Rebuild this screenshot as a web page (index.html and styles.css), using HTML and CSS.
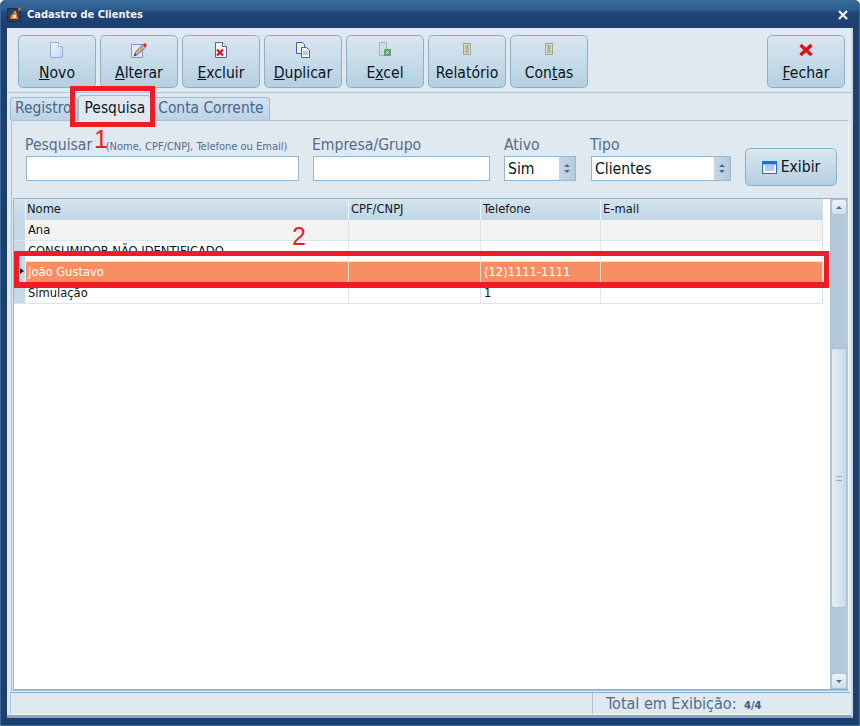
FILE: index.html
```html
<!DOCTYPE html>
<html lang="pt">
<head>
<meta charset="utf-8">
<title>Cadastro de Clientes</title>
<link rel="stylesheet" href="styles.css">
</head>
<body>
<div class="window">
  <header class="titlebar">
    <svg class="app-icon" width="15" height="15" viewBox="0 0 15 15"><rect x=".5" y="1.5" width="13" height="13" fill="#24415f" stroke="#16304d"/><path d="M3 12l1-4 2-1 1-3 2 0 1 4 1 4z" fill="#e8813c"/><rect x="6" y="8" width="3" height="3" fill="#f5e6d6"/><circle cx="12.500" cy="2" r="1.500" fill="#f07020"/></svg>
    <span class="title">Cadastro de Clientes</span>
    <svg class="close" width="10" height="10" viewBox="0 0 10 10"><path d="M1 1l8 8M9 1l-8 8" stroke="#e4ecf4" stroke-width="2.400"/></svg>
  </header>
  <main class="client">
    <div class="toolbar">
      <button class="tbtn">
        <svg width="16" height="18" viewBox="0 0 16 18"><defs><linearGradient id="pg" x1="0" y1="0" x2="1" y2="1"><stop offset="0" stop-color="#f8fbff"/><stop offset="1" stop-color="#b9d2f4"/></linearGradient></defs><path d="M1.500 1.500h8l4 4v11h-12z" fill="url(#pg)" stroke="#9aa9da"/><path d="M9.500 1.500v4h4" fill="#fff" stroke="#9aa9da"/></svg>
        <span><u>N</u>ovo</span>
      </button>
      <button class="tbtn">
        <svg width="18" height="18" viewBox="0 0 18 18"><path d="M1.500 3.500h11v13h-11z" fill="#e3e8f6" stroke="#8a92c8"/><path d="M4 15l1.500-4 8-8 2.500 2.500-8 8z" fill="#c9b078" stroke="#5a5a70" stroke-width=".8"/><path d="M14 3l2 2" stroke="#d82020" stroke-width="2.500"/><path d="M4 15l1-2.500 1.500 1.500z" fill="#3c3c48"/></svg>
        <span><u>A</u>lterar</span>
      </button>
      <button class="tbtn">
        <svg width="16" height="18" viewBox="0 0 16 18"><path d="M2.500 1.500h7l4 4v11h-11z" fill="#f6f6fa" stroke="#5c6488"/><path d="M9.500 1.500v4h4" fill="#fff" stroke="#5c6488"/><path d="M4 8.500l6 6M10 8.500l-6 6" stroke="#d01818" stroke-width="2.200"/></svg>
        <span><u>E</u>xcluir</span>
      </button>
      <button class="tbtn">
        <svg width="16" height="18" viewBox="0 0 16 18"><path d="M1.500 1.500h6l2 2v9h-8z" fill="#e8eefa" stroke="#5060a8"/><path d="M6.500 6.500h5l3 3v7h-8z" fill="#f4f7fe" stroke="#5060a8"/><path d="M8 11h5M8 13h5" stroke="#7d9ccc"/></svg>
        <span><u>D</u>uplicar</span>
      </button>
      <button class="tbtn">
        <svg width="16" height="18" viewBox="0 0 16 18"><path d="M2.500 1.500h7v13h-7z" fill="#d4dce2" stroke="#a9b0b4"/><rect x="7" y="8" width="7" height="7" rx="1" fill="#58a868"/><path d="M9 10l3 3M12 10l-3 3" stroke="#d8f0dc"/></svg>
        <span>E<u>x</u>cel</span>
      </button>
      <button class="tbtn">
        <svg width="16" height="18" viewBox="0 0 16 18"><path d="M4.500 2.500h7v11h-7z" fill="#dad8c8" stroke="#a3a491"/><path d="M6.500 5h3M6.500 7h3M6.500 9h3M6.500 11h3" stroke="#84856f"/></svg>
        <span>Relatório</span>
      </button>
      <button class="tbtn">
        <svg width="16" height="18" viewBox="0 0 16 18"><path d="M4.500 2.500h7v11h-7z" fill="#dad8c8" stroke="#a3a491"/><path d="M6.500 5h3M6.500 7h3M6.500 9h3M6.500 11h3" stroke="#84856f"/></svg>
        <span>Con<u>t</u>as</span>
      </button>
      <button class="tbtn tbtn-end">
        <svg width="16" height="18" viewBox="0 0 16 18"><path d="M2.500 4l11 10M13.500 4l-11 10" stroke="#e01010" stroke-width="3.400"/></svg>
        <span><u>F</u>echar</span>
      </button>
    </div>
    <nav class="tabs">
      <span class="tab">Registro</span>
      <span class="tab active">Pesquisa</span>
      <span class="tab after">Conta Corrente</span>
    </nav>
    <section class="page">
      <form class="filters">
        <div class="field f-search">
          <label>Pesquisar <small>(Nome, CPF/CNPJ, Telefone ou Email)</small></label>
          <div class="input"></div>
        </div>
        <div class="field f-company">
          <label>Empresa/Grupo</label>
          <div class="input"></div>
        </div>
        <div class="field f-active">
          <label>Ativo</label>
          <div class="input combo"><span class="combo-text">Sim</span><span class="spin"><i class="up"></i><i class="down"></i></span></div>
        </div>
        <div class="field f-type">
          <label>Tipo</label>
          <div class="input combo"><span class="combo-text">Clientes</span><span class="spin"><i class="up"></i><i class="down"></i></span></div>
        </div>
        <button type="button" class="show">
          <svg width="15" height="13" viewBox="0 0 15 13"><rect x=".5" y=".5" width="14" height="12" fill="#fff" stroke="#1f6fd8"/><rect x="1" y="1" width="13" height="2.500" fill="#1f6fd8"/><path d="M3 5h9M3 7h9M3 9h9" stroke="#5f98e4"/></svg>
          Exibir
        </button>
      </form>
      <div class="grid-wrap">
        <div class="grid">
          <div class="row head"><span class="ind"></span><span class="c c1">Nome</span><span class="c c2">CPF/CNPJ</span><span class="c c3">Telefone</span><span class="c c4">E-mail</span></div>
          <div class="row alt"><span class="ind"></span><span class="c c1">Ana</span><span class="c c2"></span><span class="c c3"></span><span class="c c4"></span></div>
          <div class="row"><span class="ind"></span><span class="c c1">CONSUMIDOR NÃO IDENTIFICADO</span><span class="c c2"></span><span class="c c3"></span><span class="c c4"></span></div>
          <div class="row sel"><span class="ind"><i class="marker"></i></span><span class="c c1">João Gustavo</span><span class="c c2"></span><span class="c c3">(12)1111-1111</span><span class="c c4"></span></div>
          <div class="row"><span class="ind"></span><span class="c c1">Simulação</span><span class="c c2"></span><span class="c c3">1</span><span class="c c4"></span></div>
        </div>
        <div class="scrollbar">
          <span class="sb-btn"><i class="up"></i></span>
          <span class="sb-space sb-a"></span>
          <span class="sb-thumb"><b></b></span>
          <span class="sb-space sb-b"></span>
          <span class="sb-btn"><i class="down"></i></span>
        </div>
      </div>
    </section>
    <footer class="status">
      <span class="status-left"></span>
      <span class="status-right">Total em Exibição: <b>4/4</b></span>
    </footer>
  </main>
  <div class="mark mark-1"></div>
  <div class="mark mark-2"></div>
  <span class="note note-1">1</span>
  <span class="note note-2">2</span>
</div>
</body>
</html>
```
FILE: styles.css
```css
* { box-sizing: border-box; }
html, body { margin: 0; padding: 0; }
body { width: 860px; height: 726px; overflow: hidden; font-family: "DejaVu Sans Condensed", "DejaVu Sans", sans-serif; }
button { font-family: inherit; padding: 0; cursor: default; }

.window {
  position: relative; width: 860px; height: 726px;
  background: #1c3f6e; border: 1px solid #3f6b9a; border-radius: 5px 5px 0 0;
  padding: 0 6px 7px 6px; display: flex; flex-direction: column;
}
.titlebar {
  height: 27px; flex: none; margin: 0 -6px; padding: 0 11px 0 6px;
  display: flex; align-items: center; gap: 5px;
  background: linear-gradient(#35689a 0, #2f5d8f 30%, #1f4575 45%, #1c3f6e 100%);
  border-radius: 5px 5px 0 0;
}
.title { color: #f2f6fa; font-size: 11px; font-weight: bold; font-family: "DejaVu Sans Condensed", sans-serif; }
.close { margin-left: auto; }
.client { flex: 1; background: #e0e8f0; display: flex; flex-direction: column; min-height: 0; border-bottom: 3px solid #8ea6bc; border-right: 2px solid #c8d8e6; }

.toolbar { height: 65px; flex: none; display: flex; gap: 4px; padding: 7px 6px 0 11px; border-bottom: 1px solid #a9c3d8; }
.tbtn {
  width: 78px; height: 53px; display: flex; flex-direction: column; align-items: center;
  border: 1px solid #8db0c8; border-radius: 5px;
  background: linear-gradient(#d9e7f0, #b4d0e2);
  padding-top: 5px; color: #0c1420; font-size: 15.600px; line-height: 18px;
}
.tbtn svg { display: block; margin-bottom: 5px; height: 18px; }
.tbtn-end { margin-left: auto; }

.tabs { height: 27px; flex: none; display: flex; align-items: flex-end; padding: 0 0 0 3px; }
.tab {
  height: 23px; padding: 0 5px 0 4px; border: 1px solid #9dbdd4; border-bottom: 0;
  border-radius: 4px 4px 0 0; background: linear-gradient(#d5e3ee, #bcd3e4);
  color: #44688e; font-size: 15.400px; line-height: 21px;
}
.tab.active { height: 26px; background: #e0e8f0; color: #101826; line-height: 25px; padding: 0 5px 0 6px; position: relative; margin-bottom: -1px; }
.tab.after { padding-left: 6px; }

.page { flex: 1; min-height: 0; margin: 0 2px 0 4px; border: 1px solid #a9c3d8; border-right-color: #f2f6fa; display: flex; flex-direction: column; }
.filters { height: 75px; flex: none; display: flex; padding-top: 12px; padding-left: 13px; }
.field { display: flex; flex-direction: column; }
.field label { font-size: 15.600px; line-height: 24px; color: #4f6d90; height: 23px; white-space: nowrap; }
.field small { font-size: 11px; color: #4f6d90; margin-left: 9px; }
.f-search { width: 287px; }
.f-company { width: 192px; }
.f-active { width: 86px; }
.f-type { width: 155px; }
.input { height: 25px; background: #fff; border: 1px solid #9ab6cc; }
.f-search .input { width: 273px; margin-left: 1px; }
.f-company .input { width: 177px; margin-left: 1px; }
.f-active .input { width: 72px; }
.f-type .input { width: 140px; margin-left: 1px; }
.combo { display: flex; align-items: stretch; }
.combo-text { flex: 1; font-size: 15.600px; line-height: 25px; padding-left: 3px; color: #0c1420; }
.spin { width: 16px; background: linear-gradient(90deg, #c4d6e4, #b4cbdd); display: flex; flex-direction: column; align-items: center; justify-content: center; gap: 3px; }
.up { display: block; width: 0; height: 0; border: 3.500px solid transparent; border-top: 0; border-bottom: 3px solid #4a6c92; }
.down { display: block; width: 0; height: 0; border: 3.500px solid transparent; border-bottom: 0; border-top: 3px solid #4a6c92; }
.show {
  width: 92px; height: 38px; margin-top: 15px; display: flex; align-items: center; justify-content: center; gap: 4px;
  border: 1px solid #8db0c8; border-radius: 5px; background: linear-gradient(#d9e7f0, #b4d0e2);
  color: #0c1420; font-size: 15.600px;
}

.grid-wrap { flex: 1; min-height: 0; margin: 2px 0 0 1px; display: flex; background: #fff; border: 1px solid #9ab6cc; border-bottom: 1px solid #8eaecb; border-right: 0; }
.grid { width: 809px; flex: none; }
.row { height: 21px; display: flex; background: #fff; border-bottom: 1px solid #dce6ee; }
.ind { width: 12px; flex: none; background: #c6d9e7; position: relative; border-right: 1px solid #f0f5f9; }
.marker { position: absolute; left: 6px; top: 6px; width: 0; height: 0; border: 3.500px solid transparent; border-right: 0; border-left: 4px solid #101826; }
.c { flex: none; font-size: 12.800px; line-height: 20px; padding-left: 3px; color: #0c1420; border-right: 1px solid #dce6ee; white-space: nowrap; overflow: hidden; }
.c1 { width: 323px; padding-left: 2px; }
.c2 { width: 132px; }
.c3 { width: 120px; }
.c4 { width: 222px; }
.head { border-bottom: 0; background: linear-gradient(#d5e4ee, #c0d6e5); }
.head .ind { background: linear-gradient(#d5e4ee, #c0d6e5); }
.head .c { padding-left: 2px; border-right: 1px solid #eef4f8; color: #101826; }
.head .c1 { padding-left: 1px; }
.head .c4 { border-right: 0; }
.alt { background: #f3f3f3; }
.sel { background: #f88f64; border: 1px solid #fff; border-width: 0 0 1px; }
.sel .c { color: #fff; border-right-color: #f4d5c6; }

.scrollbar { width: 18px; margin-left: auto; background: linear-gradient(90deg, #afc5d8, #b5cadb); display: flex; flex-direction: column; align-items: center; }
.sb-btn { width: 16px; height: 16px; flex: none; display: flex; align-items: center; justify-content: center; border: 1px solid #a9c3d8; border-radius: 3px; background: linear-gradient(#eef4f8, #cfdfea); }
.sb-a { height: 133px; flex: none; }
.sb-b { flex: 1; }
.sb-thumb { width: 16px; height: 260px; flex: none; border: 1px solid #a9c3d8; border-radius: 3px; background: linear-gradient(90deg, #e4eef5, #c8dbe8); display: flex; align-items: center; justify-content: center; }
.sb-thumb b { width: 6px; height: 5px; border-top: 1px solid #8eaac0; border-bottom: 1px solid #8eaac0; }

.status { height: 23px; flex: none; display: flex; border-bottom: 1px solid #f4f8fb; border-top: 1px solid #8eaecb; margin-top: 1px; margin-right: 1px; margin-left: 3px; }
.status-left { flex: 1; border-left: 1px solid #a9c3d8; border-right: 1px solid #a9c3d8; }
.status-right { width: 257px; padding-left: 13px; font-size: 16px; line-height: 22px; color: #4f6d90; }
.status-right b { font-size: 11px; color: #3c5c84; margin-left: 3px; }

.mark { position: absolute; border: 5px solid #ee1c25; pointer-events: none; }
.mark-1 { left: 69px; top: 85px; width: 85px; height: 41px; }
.mark-2 { left: 13px; top: 250px; width: 815px; height: 37px; border-top-width: 5px; border-bottom-width: 6px; }
.note { position: absolute; color: #ee1c25; font-family: "Liberation Sans", sans-serif; font-size: 25px; line-height: 28px; }
.note-1 { left: 93px; top: 124px; }
.note-2 { left: 291px; top: 221px; }
```
